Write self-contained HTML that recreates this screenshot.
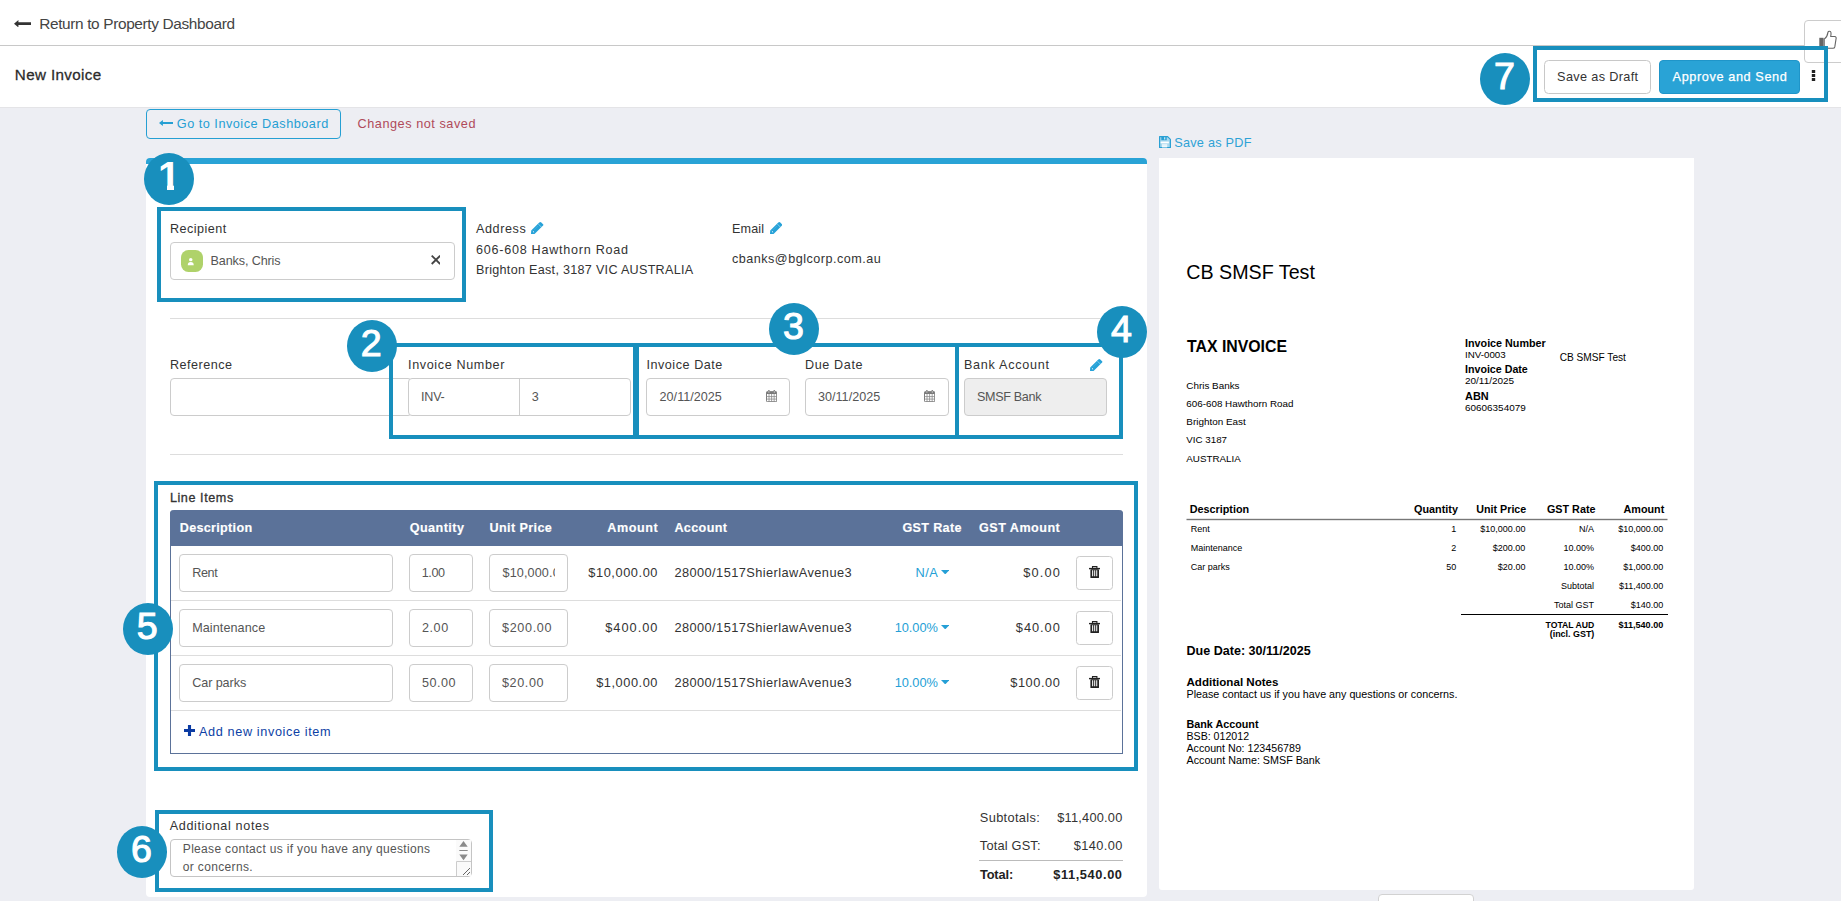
<!DOCTYPE html>
<html lang="en"><head><meta charset="utf-8"><title>New Invoice</title>
<style>
html,body{margin:0;padding:0}
body{width:1841px;height:901px;overflow:hidden;position:relative;background:#edeef3;font-family:"Liberation Sans", sans-serif;}
#app{position:absolute;left:0;top:0;width:1841px;height:901px;overflow:hidden}
#app div,#app span,#app svg{position:absolute;box-sizing:content-box}
#app span{white-space:pre}
.n{color:#fff;text-align:center}
</style></head><body><div id="app">
<header>
<div style="left:0px;top:0px;width:1841px;height:45px;background:#fff;"></div>
<div style="left:0px;top:45px;width:1841px;height:1px;background:#c8c8c8;"></div>
<div style="left:0px;top:46px;width:1841px;height:61px;background:#fff;"></div>
<div style="left:0px;top:107px;width:1841px;height:1px;background:#e4e4e7;"></div>
<div style="left:1804px;top:20px;width:40px;height:40.5px;background:#fff;border:1px solid #ccc;border-radius:4px;"></div>
<svg style="left:1819px;top:29.700px" width="19" height="20" viewBox="0 0 19 20"><rect x="0.300" y="7.800" width="4.300" height="10.500" fill="#666"/><path d="M5.200 9.100C7.500 7.500 8.700 4.500 9 2.100C9.200 0.900 11.800 0.700 12 2.700C12.100 4.100 11.900 5.500 11.700 6.500H15.600C17.200 6.500 17.400 8.100 17 9.100L15.800 16.900C15.600 17.900 15 18.300 14 18.300H9.500C7.800 18.300 6.500 17.700 5.200 17.100Z" fill="#fff" stroke="#666" stroke-width="1.100" stroke-linejoin="round"/></svg>
<svg style="left:13.600px;top:19.900px" width="17.600" height="7.400" viewBox="0 0 17.600 7.400"><path d="M0 3.700L4.400 0V2.300H17.600V5.100H4.400V7.400z" fill="#333"/></svg>
<span style="left:39.2px;top:12px;font-size:15.4px;line-height:23px;color:#444;letter-spacing:-0.353px;">Return to Property Dashboard</span>
<span style="left:14.8px;top:63px;font-size:15.2px;line-height:23px;color:#2b2b2b;letter-spacing:0.377px;-webkit-text-stroke:0.280px #2b2b2b;">New Invoice</span>
<div style="left:1544px;top:60px;width:105px;height:31.5px;background:#fff;border:1px solid #c8c8c8;border-radius:4.500px;"></div>
<span style="left:1557.1px;top:68px;font-size:12.7px;line-height:19px;color:#333;letter-spacing:0.344px;">Save as Draft</span>
<div style="left:1659px;top:60px;width:139px;height:31.5px;background:#29a3d6;border:1px solid #1f95c9;border-radius:4px;"></div>
<span style="left:1672.6px;top:68px;font-size:12.7px;line-height:19px;color:#fff;letter-spacing:0.606px;-webkit-text-stroke:0.250px #fff;">Approve and Send</span>
<svg style="left:1811px;top:69px" width="5" height="13" viewBox="0 0 5 13"><path d="M0.800 1h3.400v2.900H0.800zM0.800 5.050h3.400v2.900H0.800zM0.800 9.100h3.400v2.900H0.800z" fill="#222"/></svg>
</header>
<main>
<nav>
<div style="left:146px;top:109px;width:193px;height:28px;border:1px solid #259fd3;border-radius:4px;"></div>
<svg style="left:158.900px;top:120px" width="14" height="6" viewBox="0 0 14 6"><path d="M0 3L3.900 0V2H14V4H3.900V6z" fill="#259fd3"/></svg>
<span style="left:176.8px;top:115px;font-size:12.7px;line-height:19px;color:#259fd3;letter-spacing:0.502px;">Go to Invoice Dashboard</span>
<span style="left:357.5px;top:115px;font-size:12.7px;line-height:19px;color:#b04a5a;letter-spacing:0.541px;">Changes not saved</span>
</nav>
<section class="invoice-form">
<div style="left:146px;top:158px;width:1001px;height:738.5px;background:#fff;border-radius:4px;"></div>
<div style="left:146px;top:158px;width:1001px;height:6px;background:#29a3d6;border-radius:4px 4px 0 0;"></div>
<span style="left:170px;top:220px;font-size:12.6px;line-height:19px;color:#333;letter-spacing:0.473px;">Recipient</span>
<div style="left:170px;top:242px;width:283px;height:36px;background:#fff;border:1px solid #ccc;border-radius:4px;"></div>
<div style="left:181px;top:250px;width:22px;height:22px;background:#afd26a;border-radius:7.500px;"></div>
<svg style="left:187.100px;top:256.800px" width="7.500" height="9" viewBox="0 0 10 12"><circle cx="5" cy="3.500" r="2.300" fill="#fff"/><path d="M1 11c0-3 1.500-4.300 4-4.300s4 1.300 4 4.300z" fill="#fff"/></svg>
<span style="left:210.5px;top:252px;font-size:12.6px;line-height:19px;color:#555;letter-spacing:-0.117px;">Banks, Chris</span>
<svg style="left:430.600px;top:255.200px" width="9.900" height="9.700" viewBox="0 0 9.900 9.700"><path d="M0.700 0.700l8.500 8.300M9.200 0.700l-8.500 8.300" stroke="#444" stroke-width="1.800" fill="none"/></svg>
<span style="left:476px;top:220px;font-size:12.6px;line-height:19px;color:#333;letter-spacing:0.583px;">Address</span>
<svg style="left:531.1px;top:221.9px" width="12.600" height="12.200" viewBox="0 0 12.600 12.200"><path d="M0 12.200L0.200 8.600L8.300 0.500Q9.400-0.300 10.300 0.500L12.100 2.300Q12.700 2.900 12.100 3.500L3.600 12Z" fill="#26a2d8"/><path d="M7.400 2.100L10.400 5.100" stroke="#bfe3f4" stroke-width="0.600"/><path d="M3.200 7.700L6.900 4" stroke="#8fd0ee" stroke-width="0.500" stroke-dasharray="0.600 0.600"/><path d="M1.900 9.200L3.100 10.400" stroke="#fff" stroke-width="0.900"/></svg>
<span style="left:476px;top:241px;font-size:12.6px;line-height:19px;color:#333;letter-spacing:0.738px;">606-608 Hawthorn Road</span>
<span style="left:476px;top:261px;font-size:12.6px;line-height:19px;color:#333;letter-spacing:0.29px;">Brighton East, 3187 VIC AUSTRALIA</span>
<span style="left:732px;top:220px;font-size:12.6px;line-height:19px;color:#333;letter-spacing:0.125px;">Email</span>
<svg style="left:769.5px;top:221.9px" width="12.600" height="12.200" viewBox="0 0 12.600 12.200"><path d="M0 12.200L0.200 8.600L8.300 0.500Q9.400-0.300 10.300 0.500L12.100 2.300Q12.700 2.900 12.100 3.500L3.600 12Z" fill="#26a2d8"/><path d="M7.400 2.100L10.400 5.100" stroke="#bfe3f4" stroke-width="0.600"/><path d="M3.200 7.700L6.900 4" stroke="#8fd0ee" stroke-width="0.500" stroke-dasharray="0.600 0.600"/><path d="M1.900 9.200L3.100 10.400" stroke="#fff" stroke-width="0.900"/></svg>
<span style="left:732px;top:250px;font-size:12.6px;line-height:19px;color:#333;letter-spacing:0.495px;">cbanks@bglcorp.com.au</span>
<div style="left:170px;top:318px;width:953px;height:1px;background:#ddd;"></div>
<div style="left:170px;top:454px;width:953px;height:1px;background:#ddd;"></div>
<span style="left:170px;top:356px;font-size:12.6px;line-height:19px;color:#333;letter-spacing:0.486px;">Reference</span>
<div style="left:170px;top:378px;width:240px;height:36px;background:#fff;border:1px solid #ccc;border-radius:4px;"></div>
<span style="left:408px;top:356px;font-size:12.6px;line-height:19px;color:#333;letter-spacing:0.631px;">Invoice Number</span>
<div style="left:408px;top:378px;width:221px;height:36px;background:#fff;border:1px solid #ccc;border-radius:4px;"></div>
<div style="left:519px;top:379px;width:1px;height:36px;background:#ccc;"></div>
<span style="left:421px;top:388px;font-size:12.6px;line-height:19px;color:#555;letter-spacing:-0.233px;">INV-</span>
<span style="left:531.7px;top:388px;font-size:12.6px;line-height:19px;color:#555;letter-spacing:0.284px;">3</span>
<span style="left:646.4px;top:356px;font-size:12.6px;line-height:19px;color:#333;letter-spacing:0.544px;">Invoice Date</span>
<div style="left:646px;top:378px;width:142px;height:36px;background:#fff;border:1px solid #ccc;border-radius:4px;"></div>
<span style="left:659.6px;top:388px;font-size:12.6px;line-height:19px;color:#555;letter-spacing:0.01px;">20/11/2025</span>
<svg style="left:765.8px;top:389.7px" width="11.200" height="12.200" viewBox="0 0 11.200 12.200"><rect x="0.500" y="1.700" width="10.200" height="10" rx="0.800" fill="#fff" stroke="#7a7a7a" stroke-width="1"/><path d="M0.500 1.700h10.200v2.300H0.500z" fill="#7a7a7a"/><path d="M2.900 0.900v2.300M8.300 0.900v2.300" stroke="#7a7a7a" stroke-width="1.800" stroke-linecap="round"/><path d="M2.900 1v2M8.300 1v2" stroke="#e6e6e6" stroke-width="0.600"/><path d="M3.050 4v7.700M5.600 4v7.700M8.150 4v7.700M0.500 6.600h10.200M0.500 9.100h10.200" stroke="#8a8a8a" stroke-width="0.800" fill="none"/></svg>
<span style="left:805px;top:356px;font-size:12.6px;line-height:19px;color:#333;letter-spacing:0.626px;">Due Date</span>
<div style="left:805px;top:378px;width:142px;height:36px;background:#fff;border:1px solid #ccc;border-radius:4px;"></div>
<span style="left:818px;top:388px;font-size:12.6px;line-height:19px;color:#555;letter-spacing:0.01px;">30/11/2025</span>
<svg style="left:924.3px;top:389.7px" width="11.200" height="12.200" viewBox="0 0 11.200 12.200"><rect x="0.500" y="1.700" width="10.200" height="10" rx="0.800" fill="#fff" stroke="#7a7a7a" stroke-width="1"/><path d="M0.500 1.700h10.200v2.300H0.500z" fill="#7a7a7a"/><path d="M2.900 0.900v2.300M8.300 0.900v2.300" stroke="#7a7a7a" stroke-width="1.800" stroke-linecap="round"/><path d="M2.900 1v2M8.300 1v2" stroke="#e6e6e6" stroke-width="0.600"/><path d="M3.050 4v7.700M5.600 4v7.700M8.150 4v7.700M0.500 6.600h10.200M0.500 9.100h10.200" stroke="#8a8a8a" stroke-width="0.800" fill="none"/></svg>
<span style="left:964px;top:356px;font-size:12.6px;line-height:19px;color:#333;letter-spacing:0.717px;">Bank Account</span>
<svg style="left:1090.3px;top:359.2px" width="12.600" height="12.200" viewBox="0 0 12.600 12.200"><path d="M0 12.200L0.200 8.600L8.300 0.500Q9.400-0.300 10.300 0.500L12.100 2.300Q12.700 2.900 12.100 3.500L3.600 12Z" fill="#26a2d8"/><path d="M7.400 2.100L10.400 5.100" stroke="#bfe3f4" stroke-width="0.600"/><path d="M3.200 7.700L6.900 4" stroke="#8fd0ee" stroke-width="0.500" stroke-dasharray="0.600 0.600"/><path d="M1.900 9.200L3.100 10.400" stroke="#fff" stroke-width="0.900"/></svg>
<div style="left:964px;top:378px;width:141px;height:36px;background:#eee;border:1px solid #ccc;border-radius:4px;"></div>
<span style="left:977px;top:388px;font-size:12.6px;line-height:19px;color:#555;letter-spacing:-0.336px;">SMSF Bank</span>
<section class="line-items">
<span style="left:169.9px;top:489px;font-size:12.6px;line-height:19px;color:#333;letter-spacing:0.577px;-webkit-text-stroke:0.300px #333;">Line Items</span>
<div style="left:170px;top:510px;width:953px;height:243.5px;background:#fff;border:1px solid #5b7299;border-top:0;border-radius:4px 4px 0 0;width:951px;height:243px;"></div>
<div style="left:170px;top:510px;width:953px;height:36px;background:#5b7299;border-radius:4px 4px 0 0;"></div>
<span style="left:179.8px;top:519px;font-size:12.6px;line-height:19px;color:#fff;font-weight:700;letter-spacing:0.302px;-webkit-text-stroke:0.150px #fff;">Description</span>
<span style="left:409.7px;top:519px;font-size:12.6px;line-height:19px;color:#fff;font-weight:700;letter-spacing:0.46px;-webkit-text-stroke:0.150px #fff;">Quantity</span>
<span style="left:489.5px;top:519px;font-size:12.6px;line-height:19px;color:#fff;font-weight:700;letter-spacing:0.389px;-webkit-text-stroke:0.150px #fff;">Unit Price</span>
<span style="left:607.2px;top:519px;font-size:12.6px;line-height:19px;color:#fff;font-weight:700;letter-spacing:0.604px;-webkit-text-stroke:0.150px #fff;">Amount</span>
<span style="left:674.4px;top:519px;font-size:12.6px;line-height:19px;color:#fff;font-weight:700;letter-spacing:0.371px;-webkit-text-stroke:0.150px #fff;">Account</span>
<span style="left:902.5px;top:519px;font-size:12.6px;line-height:19px;color:#fff;font-weight:700;letter-spacing:0.316px;-webkit-text-stroke:0.150px #fff;">GST Rate</span>
<span style="left:979px;top:519px;font-size:12.6px;line-height:19px;color:#fff;font-weight:700;letter-spacing:0.478px;-webkit-text-stroke:0.150px #fff;">GST Amount</span>
<div style="left:171px;top:600px;width:950px;height:1px;background:#ddd;"></div>
<div style="left:179px;top:554px;width:212px;height:36px;background:#fff;border:1px solid #ccc;border-radius:4px;"></div>
<span style="left:192.2px;top:564px;font-size:12.6px;line-height:19px;color:#555;letter-spacing:-0.37px;">Rent</span>
<div style="left:409px;top:554px;width:62px;height:36px;background:#fff;border:1px solid #ccc;border-radius:4px;"></div>
<span style="left:421.7px;top:564px;font-size:12.6px;line-height:19px;color:#555;letter-spacing:-0.372px;">1.00</span>
<div style="left:489px;top:554px;width:77px;height:36px;background:#fff;border:1px solid #ccc;border-radius:4px;"></div>
<div style="left:489px;top:554px;width:66.400px;height:38px;overflow:hidden">
<span style="left:13.5px;top:10px;font-size:12.6px;line-height:19px;color:#555;letter-spacing:0.141px;">$10,000.00</span>
</div>
<span style="left:588.3px;top:563px;font-size:12.8px;line-height:19px;color:#333;letter-spacing:0.571px;">$10,000.00</span>
<span style="left:674.4px;top:563px;font-size:12.8px;line-height:19px;color:#333;letter-spacing:0.426px;">28000/1517ShierlawAvenue3</span>
<span style="left:915.4px;top:563px;font-size:12.8px;line-height:19px;color:#259fd6;letter-spacing:0.528px;">N/A</span>
<svg style="left:940.9px;top:569.9px" width="8.400" height="4.400" viewBox="0 0 8.400 4.400"><path d="M0 0h8.400L4.200 4.400z" fill="#259fd6"/></svg>
<span style="left:1023.3px;top:563px;font-size:12.8px;line-height:19px;color:#333;letter-spacing:1.117px;">$0.00</span>
<div style="left:1076px;top:556px;width:35px;height:32px;background:#fff;border:1px solid #ccc;border-radius:3.500px;"></div>
<svg style="left:1088.8px;top:565.9px" width="11.400" height="12.200" viewBox="0 0 11.400 12.200"><path d="M3.500 2V0.600H7.900V2" fill="none" stroke="#222" stroke-width="1.100"/><rect x="0" y="1.900" width="11.400" height="1.400" fill="#222"/><rect x="1.400" y="3.200" width="8.600" height="9" rx="0.800" fill="#222"/><path d="M3.650 4.300v6M5.700 4.300v6M7.750 4.300v6" stroke="#fff" stroke-width="1.050"/></svg>
<div style="left:171px;top:655px;width:950px;height:1px;background:#ddd;"></div>
<div style="left:179px;top:609px;width:212px;height:36px;background:#fff;border:1px solid #ccc;border-radius:4px;"></div>
<span style="left:192.2px;top:619px;font-size:12.6px;line-height:19px;color:#555;letter-spacing:0.087px;">Maintenance</span>
<div style="left:409px;top:609px;width:62px;height:36px;background:#fff;border:1px solid #ccc;border-radius:4px;"></div>
<span style="left:422px;top:619px;font-size:12.6px;line-height:19px;color:#555;letter-spacing:0.561px;">2.00</span>
<div style="left:489px;top:609px;width:77px;height:36px;background:#fff;border:1px solid #ccc;border-radius:4px;"></div>
<span style="left:502px;top:619px;font-size:12.6px;line-height:19px;color:#555;letter-spacing:0.661px;">$200.00</span>
<span style="left:605.2px;top:618px;font-size:12.8px;line-height:19px;color:#333;letter-spacing:1.006px;">$400.00</span>
<span style="left:674.4px;top:618px;font-size:12.8px;line-height:19px;color:#333;letter-spacing:0.426px;">28000/1517ShierlawAvenue3</span>
<span style="left:894.8px;top:618px;font-size:12.8px;line-height:19px;color:#259fd6;letter-spacing:-0.081px;">10.00%</span>
<svg style="left:940.9px;top:625.0px" width="8.400" height="4.400" viewBox="0 0 8.400 4.400"><path d="M0 0h8.400L4.200 4.400z" fill="#259fd6"/></svg>
<span style="left:1015.8px;top:618px;font-size:12.8px;line-height:19px;color:#333;letter-spacing:0.972px;">$40.00</span>
<div style="left:1076px;top:611px;width:35px;height:32px;background:#fff;border:1px solid #ccc;border-radius:3.500px;"></div>
<svg style="left:1088.8px;top:621.0px" width="11.400" height="12.200" viewBox="0 0 11.400 12.200"><path d="M3.500 2V0.600H7.900V2" fill="none" stroke="#222" stroke-width="1.100"/><rect x="0" y="1.900" width="11.400" height="1.400" fill="#222"/><rect x="1.400" y="3.200" width="8.600" height="9" rx="0.800" fill="#222"/><path d="M3.650 4.300v6M5.700 4.300v6M7.750 4.300v6" stroke="#fff" stroke-width="1.050"/></svg>
<div style="left:171px;top:710px;width:950px;height:1px;background:#ddd;"></div>
<div style="left:179px;top:664px;width:212px;height:36px;background:#fff;border:1px solid #ccc;border-radius:4px;"></div>
<span style="left:192.2px;top:674px;font-size:12.6px;line-height:19px;color:#555;letter-spacing:-0.074px;">Car parks</span>
<div style="left:409px;top:664px;width:62px;height:36px;background:#fff;border:1px solid #ccc;border-radius:4px;"></div>
<span style="left:422px;top:674px;font-size:12.6px;line-height:19px;color:#555;letter-spacing:0.496px;">50.00</span>
<div style="left:489px;top:664px;width:77px;height:36px;background:#fff;border:1px solid #ccc;border-radius:4px;"></div>
<span style="left:502px;top:674px;font-size:12.6px;line-height:19px;color:#555;letter-spacing:0.614px;">$20.00</span>
<span style="left:596.2px;top:673px;font-size:12.8px;line-height:19px;color:#333;letter-spacing:0.545px;">$1,000.00</span>
<span style="left:674.4px;top:673px;font-size:12.8px;line-height:19px;color:#333;letter-spacing:0.426px;">28000/1517ShierlawAvenue3</span>
<span style="left:894.8px;top:673px;font-size:12.8px;line-height:19px;color:#259fd6;letter-spacing:-0.081px;">10.00%</span>
<svg style="left:940.9px;top:680.1px" width="8.400" height="4.400" viewBox="0 0 8.400 4.400"><path d="M0 0h8.400L4.200 4.400z" fill="#259fd6"/></svg>
<span style="left:1010.3px;top:673px;font-size:12.8px;line-height:19px;color:#333;letter-spacing:0.539px;">$100.00</span>
<div style="left:1076px;top:666px;width:35px;height:32px;background:#fff;border:1px solid #ccc;border-radius:3.500px;"></div>
<svg style="left:1088.8px;top:676.1px" width="11.400" height="12.200" viewBox="0 0 11.400 12.200"><path d="M3.500 2V0.600H7.900V2" fill="none" stroke="#222" stroke-width="1.100"/><rect x="0" y="1.900" width="11.400" height="1.400" fill="#222"/><rect x="1.400" y="3.200" width="8.600" height="9" rx="0.800" fill="#222"/><path d="M3.650 4.300v6M5.700 4.300v6M7.750 4.300v6" stroke="#fff" stroke-width="1.050"/></svg>
<svg style="left:184px;top:725px" width="11" height="11" viewBox="0 0 11 11"><path d="M5.500 0v11M0 5.500h11" stroke="#0b3ba3" stroke-width="3.100"/></svg>
<span style="left:199px;top:723px;font-size:12.7px;line-height:19px;color:#0d3fa5;letter-spacing:0.616px;">Add new invoice item</span>
</section>
<section class="notes-totals">
<span style="left:169.7px;top:817px;font-size:12.6px;line-height:19px;color:#333;letter-spacing:0.645px;">Additional notes</span>
<div style="left:170px;top:839px;width:300px;height:36px;background:#fff;border:1px solid #c4c4c4;border-radius:4px;"></div>
<span style="left:182.8px;top:840px;font-size:12px;line-height:18px;color:#555;letter-spacing:0.327px;">Please contact us if you have any questions</span>
<span style="left:182.8px;top:858px;font-size:12px;line-height:18px;color:#555;letter-spacing:0.343px;">or concerns.</span>
<svg style="left:456px;top:840px" width="15" height="36" viewBox="0 0 15 36"><rect x="0" y="0" width="15" height="36" fill="#fafafa"/><path d="M7.500 1l4.200 5.700H3.300zM7.500 20.200l4.200-5.700H3.300z" fill="#8a8a8a"/><path d="M3.300 10.500h8.400" stroke="#8a8a8a" stroke-width="1"/><path d="M0.500 36V21.500H15" stroke="#ccc" fill="none"/><path d="M7 35l7-7M11 35l3-3" stroke="#555" stroke-width="0.900"/></svg>
<span style="left:979.8px;top:808px;font-size:12.8px;line-height:19px;color:#333;letter-spacing:0.342px;">Subtotals:</span>
<span style="left:1057.3px;top:808px;font-size:12.8px;line-height:19px;color:#333;letter-spacing:0.21px;">$11,400.00</span>
<span style="left:979.8px;top:836px;font-size:12.8px;line-height:19px;color:#333;letter-spacing:0.185px;">Total GST:</span>
<span style="left:1073.8px;top:836px;font-size:12.8px;line-height:19px;color:#333;letter-spacing:0.372px;">$140.00</span>
<div style="left:979px;top:860px;width:144px;height:1px;background:#bbb;"></div>
<span style="left:979.9px;top:865px;font-size:12.8px;line-height:19px;color:#222;font-weight:700;letter-spacing:-0.118px;">Total:</span>
<span style="left:1053.2px;top:865px;font-size:12.8px;line-height:19px;color:#222;font-weight:700;letter-spacing:0.606px;">$11,540.00</span>
</section>
</section>
<aside class="pdf-preview">
<svg style="left:1158.900px;top:135.800px" width="12" height="12.200" viewBox="0 0 12 12.200"><path d="M0.600 0.600H8.600L11.400 3.400V11.600H0.600z" fill="#a9d8ee" stroke="#2aa0d4" stroke-width="1.200" stroke-linejoin="round"/><path d="M2.300 0.900h5.400v3.300H2.300z" fill="#2aa0d4"/><path d="M5.300 1.300h0.900v2.300h-0.900z" fill="#fff"/><path d="M1.600 5.600h8.300v1.700H1.600z" fill="#fff"/><path d="M3 8.400h5.200v3H3z" fill="#fff"/><path d="M3 9.900h5.200" stroke="#a9d8ee" stroke-width="0.500"/></svg>
<span style="left:1174.3px;top:134px;font-size:12.7px;line-height:19px;color:#2da2d6;letter-spacing:0.235px;">Save as PDF</span>
<div style="left:1159px;top:158px;width:535px;height:732px;background:#fff;border-radius:0 0 3px 3px;"></div>
<span style="left:1186.3px;top:257px;font-size:19.68px;line-height:30px;color:#000;">CB SMSF Test</span>
<span style="left:1187px;top:335px;font-size:15.83px;line-height:24px;color:#000;font-weight:700;">TAX INVOICE</span>
<span style="left:1186.3px;top:378px;font-size:9.88px;line-height:15px;color:#000;">Chris Banks</span>
<span style="left:1186.3px;top:396px;font-size:9.84px;line-height:15px;color:#000;">606-608 Hawthorn Road</span>
<span style="left:1186.3px;top:414px;font-size:9.92px;line-height:15px;color:#000;">Brighton East</span>
<span style="left:1186.3px;top:432px;font-size:9.77px;line-height:15px;color:#000;">VIC 3187</span>
<span style="left:1186.3px;top:451px;font-size:9.8px;line-height:15px;color:#000;">AUSTRALIA</span>
<span style="left:1465px;top:335px;font-size:10.78px;line-height:16px;color:#000;font-weight:700;">Invoice Number</span>
<span style="left:1465px;top:347px;font-size:9.78px;line-height:15px;color:#000;">INV-0003</span>
<span style="left:1465px;top:361px;font-size:10.67px;line-height:16px;color:#000;font-weight:700;">Invoice Date</span>
<span style="left:1465px;top:373px;font-size:9.98px;line-height:15px;color:#000;">20/11/2025</span>
<span style="left:1465px;top:388px;font-size:10.95px;line-height:16px;color:#000;font-weight:700;">ABN</span>
<span style="left:1465px;top:400px;font-size:9.94px;line-height:15px;color:#000;">60606354079</span>
<span style="left:1559.7px;top:350px;font-size:10.14px;line-height:15px;color:#000;">CB SMSF Test</span>
<span style="left:1189.7px;top:501px;font-size:10.8px;line-height:16px;color:#000;font-weight:700;">Description</span>
<span style="left:1414.1px;top:501px;font-size:10.82px;line-height:16px;color:#000;font-weight:700;">Quantity</span>
<span style="left:1476.3px;top:501px;font-size:10.71px;line-height:16px;color:#000;font-weight:700;">Unit Price</span>
<span style="left:1547px;top:501px;font-size:10.77px;line-height:16px;color:#000;font-weight:700;">GST Rate</span>
<span style="left:1623.6px;top:501px;font-size:10.78px;line-height:16px;color:#000;font-weight:700;">Amount</span>
<svg style="left:1186px;top:517px" width="482" height="4" viewBox="0 0 482 4"><rect x="0.500" y="1.800" width="481" height="1.400" fill="#777"/></svg>
<span style="left:1190.7px;top:522px;font-size:9px;line-height:14px;color:#000;">Rent</span>
<span style="left:1190.7px;top:541px;font-size:9px;line-height:14px;color:#000;">Maintenance</span>
<span style="left:1190.7px;top:560px;font-size:9px;line-height:14px;color:#000;">Car parks</span>
<span style="left:1451.18px;top:522px;font-size:9px;line-height:14px;color:#000;">1</span>
<span style="left:1451.18px;top:541px;font-size:9px;line-height:14px;color:#000;">2</span>
<span style="left:1446.18px;top:560px;font-size:9px;line-height:14px;color:#000;">50</span>
<span style="left:1480.35px;top:522px;font-size:9px;line-height:14px;color:#000;">$10,000.00</span>
<span style="left:1492.85px;top:541px;font-size:9px;line-height:14px;color:#000;">$200.00</span>
<span style="left:1497.87px;top:560px;font-size:9px;line-height:14px;color:#000;">$20.00</span>
<span style="left:1579.08px;top:522px;font-size:9px;line-height:14px;color:#000;">N/A</span>
<span style="left:1563.57px;top:541px;font-size:9px;line-height:14px;color:#000;">10.00%</span>
<span style="left:1563.57px;top:560px;font-size:9px;line-height:14px;color:#000;">10.00%</span>
<span style="left:1561.07px;top:579px;font-size:9px;line-height:14px;color:#000;">Subtotal</span>
<span style="left:1554.08px;top:598px;font-size:9px;line-height:14px;color:#000;">Total GST</span>
<span style="left:1618.25px;top:522px;font-size:9px;line-height:14px;color:#000;">$10,000.00</span>
<span style="left:1630.75px;top:541px;font-size:9px;line-height:14px;color:#000;">$400.00</span>
<span style="left:1623.25px;top:560px;font-size:9px;line-height:14px;color:#000;">$1,000.00</span>
<span style="left:1618.91px;top:579px;font-size:9px;line-height:14px;color:#000;">$11,400.00</span>
<span style="left:1630.75px;top:598px;font-size:9px;line-height:14px;color:#000;">$140.00</span>
<div style="left:1461px;top:614px;width:206.5px;height:1px;background:#000;"></div>
<span style="left:1545.5px;top:619px;font-size:8.68px;line-height:13px;color:#000;font-weight:700;">TOTAL AUD</span>
<span style="left:1549.7px;top:628px;font-size:8.94px;line-height:13px;color:#000;font-weight:700;">(incl. GST)</span>
<span style="left:1618.4px;top:618px;font-size:9.07px;line-height:14px;color:#000;font-weight:700;">$11,540.00</span>
<span style="left:1186.5px;top:642px;font-size:12.56px;line-height:19px;color:#000;font-weight:700;">Due Date: 30/11/2025</span>
<span style="left:1186.5px;top:674px;font-size:11.59px;line-height:17px;color:#000;font-weight:700;">Additional Notes</span>
<span style="left:1186.5px;top:686px;font-size:10.74px;line-height:16px;color:#000;">Please contact us if you have any questions or concerns.</span>
<span style="left:1186.5px;top:716px;font-size:10.77px;line-height:16px;color:#000;font-weight:700;">Bank Account</span>
<span style="left:1186.5px;top:728px;font-size:10.62px;line-height:16px;color:#000;">BSB: 012012</span>
<span style="left:1186.5px;top:740px;font-size:10.67px;line-height:16px;color:#000;">Account No: 123456789</span>
<span style="left:1186.5px;top:752px;font-size:10.74px;line-height:16px;color:#000;">Account Name: SMSF Bank</span>
</aside>
<div style="left:1378.3px;top:894px;width:93.4px;height:10px;background:#fff;border:1px solid #d2d2d2;border-radius:4px 4px 0 0;"></div>
</main>
<section class="callouts">
<div style="left:157.3px;top:207px;width:300.7px;height:87px;border:4px solid #188fbd;"></div>
<div style="left:389px;top:343px;width:242px;height:87.80000000000001px;border:4px solid #188fbd;"></div>
<div style="left:633px;top:343px;width:318px;height:87.80000000000001px;border:4px solid #188fbd;"></div>
<div style="left:954.5px;top:343px;width:160.9000000000001px;height:87.80000000000001px;border:4px solid #188fbd;"></div>
<div style="left:154px;top:481.4px;width:976.3px;height:281.6px;border:4px solid #188fbd;"></div>
<div style="left:155px;top:810px;width:330px;height:74px;border:4px solid #188fbd;"></div>
<div style="left:1533.2px;top:46px;width:286.5999999999999px;height:47.8px;border:4px solid #188fbd;"></div>
<div style="left:143.8px;top:152.8px;width:50.4px;height:52.4px;border-radius:50%;background:#188fbd"></div>
<span class="n" style="left:139px;top:145.9px;width:60px;line-height:60px;font-size:40px;font-weight:700;">1</span>
<div class="foot" style="left:157px;top:184px;width:10.2px;height:8px;background:#188fbd"></div>
<div class="foot" style="left:173.6px;top:184px;width:8px;height:8px;background:#188fbd"></div>
<div style="left:346.5px;top:319.8px;width:50.4px;height:52.4px;border-radius:50%;background:#188fbd"></div>
<span class="n" style="left:341.1px;top:312.9px;width:60px;line-height:60px;font-size:37.6px;font-weight:400;-webkit-text-stroke:1.1px #fff;">2</span>
<div style="left:768.8px;top:302.8px;width:50.4px;height:52.4px;border-radius:50%;background:#188fbd"></div>
<span class="n" style="left:763.4px;top:295.9px;width:60px;line-height:60px;font-size:37.6px;font-weight:400;-webkit-text-stroke:1.1px #fff;">3</span>
<div style="left:1096.8px;top:305.8px;width:50.4px;height:52.4px;border-radius:50%;background:#188fbd"></div>
<span class="n" style="left:1091.4px;top:298.9px;width:60px;line-height:60px;font-size:37.6px;font-weight:400;-webkit-text-stroke:1.1px #fff;">4</span>
<div style="left:122.6px;top:602.8px;width:50.4px;height:52.4px;border-radius:50%;background:#188fbd"></div>
<span class="n" style="left:117.2px;top:595.9px;width:60px;line-height:60px;font-size:37.6px;font-weight:400;-webkit-text-stroke:1.1px #fff;">5</span>
<div style="left:116.65px;top:826.1px;width:50.8px;height:52.4px;border-radius:50%;background:#188fbd"></div>
<span class="n" style="left:111.45px;top:819.2px;width:60px;line-height:60px;font-size:37.6px;font-weight:400;-webkit-text-stroke:1.1px #fff;">6</span>
<div style="left:1479.8px;top:52.8px;width:50.4px;height:52.4px;border-radius:50%;background:#188fbd"></div>
<span class="n" style="left:1474.4px;top:45.9px;width:60px;line-height:60px;font-size:37.6px;font-weight:400;-webkit-text-stroke:1.1px #fff;">7</span>
</section>
</div></body></html>
